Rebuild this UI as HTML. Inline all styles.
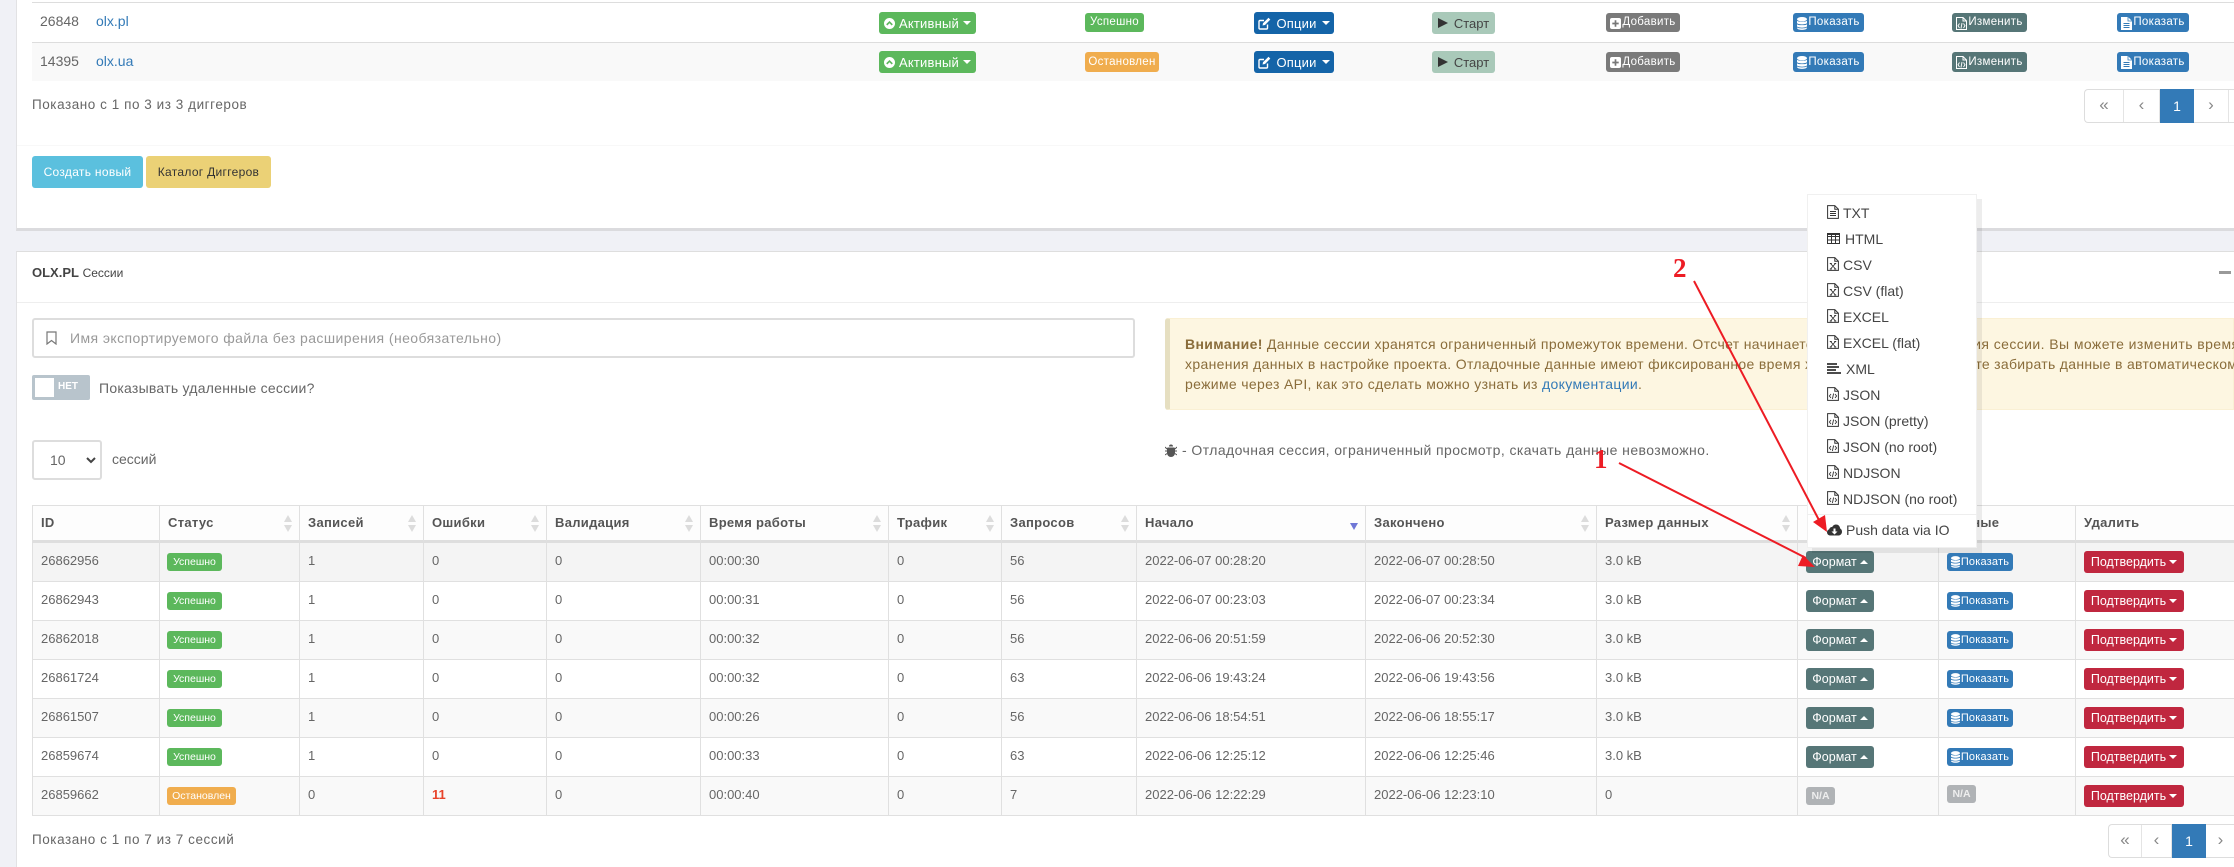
<!DOCTYPE html>
<html lang="ru"><head><meta charset="utf-8"><title>Сессии</title>
<style>
*{box-sizing:border-box}
html,body{margin:0;padding:0}
body{width:2234px;height:867px;overflow:hidden;background:#f0f1f6;font:13px "Liberation Sans","DejaVu Sans",sans-serif;color:#666;position:relative}
.abs,.t,.b,.l{position:absolute;white-space:nowrap}
.t{line-height:20px}
.w14{font-size:14px;letter-spacing:.42px}
.al{color:#8a6d3b;font-size:14px;letter-spacing:.34px}
a{color:#337ab7;text-decoration:none}
.b{display:flex;align-items:center;justify-content:center;border-radius:3px;color:#fff;line-height:1}
.b svg{flex:none}
.car{display:inline-block;width:0;height:0;border-left:4px solid transparent;border-right:4px solid transparent;border-top:4px solid #fff;margin-left:3px}
.up{border-top:0;border-bottom:4px solid #fff}
.act{width:97px;height:22px;background:#5cb85c;font-size:13px;letter-spacing:.2px;left:879px;gap:4px}
.opt{width:80px;height:22px;background:#1464a8;font-size:13px;letter-spacing:.2px;left:1254px;gap:5px}
.st{width:63px;height:22px;background:#a9c9b9;color:#444;font-size:13px;left:1432px;gap:6px}
.sm{font-size:11.5px;letter-spacing:.3px;gap:1px;padding-top:1px}
.add{left:1606px;width:74px;background:#7a7a7a}
.show{left:1793px;width:71px;background:#337ab7}
.chg{left:1952px;width:75px;background:#567677}
.sh2{left:2117px;width:72px;background:#337ab7}
.ok{background:#5cb85c}.warn{background:#f0ad4e}
#tb{position:absolute;left:32px;top:505px;border-collapse:separate;border-spacing:0;table-layout:fixed;width:2244px}
#tb th,#tb td{padding:0 8px;vertical-align:top;text-align:left;border-right:1px solid #e0e0e0}
#tb th{height:38px;background:#fdfdfd;border-top:1px solid #e0e0e0;border-bottom:3px solid #dedede;color:#555;font-weight:bold;font-size:13px;letter-spacing:.3px;line-height:34px;position:relative}
#tb td{height:39px;border-bottom:1px solid #e0e0e0;padding-top:8px;line-height:20px;color:#666}
#tb tr>*:first-child{border-left:1px solid #e0e0e0}
#tb tr.h td{background:#f4f4f4}
#tb tr.o td{background:#f9f9f9}
.lab{display:block;margin-top:2px;margin-left:-1px;height:18px;border-radius:3px;color:#fff;font-size:10.5px;line-height:18px;text-align:center;width:55px}
.sort:before,.sort:after{content:"";position:absolute;right:7px;width:0;height:0;border-left:4px solid transparent;border-right:4px solid transparent}
.sort:before{top:9px;border-bottom:7px solid #dcdcdc}
.sort:after{top:19px;border-top:7px solid #dcdcdc}
.sorted:before{display:none}
.sorted:after{top:17px;border-top:7px solid #6f77d6}
.fm{display:flex;align-items:center;justify-content:center;width:68px;height:22px;background:#567677;border-radius:3px;color:#fff;font-size:12.5px;line-height:1}
.sh{display:flex;align-items:center;justify-content:center;gap:1px;width:66px;height:18px;margin-top:2px;background:#337ab7;border-radius:3px;color:#fff;font-size:11px;letter-spacing:.2px;line-height:1}
.cf{display:flex;align-items:center;justify-content:center;width:100px;height:22px;background:#c0273f;border-radius:3px;color:#fff;font-size:12.5px;line-height:1}
.na{display:block;background:#b0b3b6;color:#eee;font-size:10.5px;font-weight:bold;border-radius:3px;text-align:center;height:18px;line-height:18px;width:29px}
.pg{position:absolute;height:34px;background:#fff;border:1px solid #ddd;border-right:0;border-radius:4px 0 0 4px;display:flex;color:#888;font-size:17px;line-height:30px;text-align:center}
.pg span{display:block;flex:none;border-right:1px solid #e4e4e4;height:32px}
.pg .cur{background:#337ab7;color:#fff;height:34px;margin:-1px 0;line-height:34px;border:0;font-size:14px}
#dd{position:absolute;left:1807px;top:194px;width:170px;height:354px;background:#fff;border:1px solid #f0f0f0;box-shadow:5px 5px 0 rgba(0,0,0,.07)}
#dd div{position:absolute;left:0;height:20px;white-space:nowrap;color:#444;font-size:14px;line-height:20px;padding-left:35px}
#dd svg{position:absolute;left:19px;top:2px;color:#333}
.hidden{position:absolute;width:0;height:0}
</style></head><body>
<svg class="hidden"><defs>
<symbol id="fdoc" viewBox="0 0 12 14"><path d="M.6.6h7.2l3.600 3.600v9.200H.6z M7.800.6v3.600h3.600" fill="none" stroke="currentColor"/><path d="M3 6.500h6M3 8.500h6M3 10.500h6" stroke="currentColor"/></symbol>
<symbol id="fx" viewBox="0 0 12 14"><path d="M.6.6h7.200l3.600 3.600v9.200H.6z M7.800.6v3.600h3.600" fill="none" stroke="currentColor"/><path d="M3.500 6.500l5 5.500M8.500 6.500l-5 5.500M2.800 6.500h2M7.200 6.500h2M2.800 12h2M7.200 12h2" stroke="currentColor" stroke-width=".9" fill="none"/></symbol>
<symbol id="fc" viewBox="0 0 12 14"><path d="M.6.6h7.200l3.600 3.600v9.200H.6z M7.800.6v3.600h3.600" fill="none" stroke="currentColor"/><path d="M4 7L2.400 9 4 11M8 7l1.600 2L8 11M6.600 6.500l-1.200 5.500" stroke="currentColor" stroke-width=".9" fill="none"/></symbol>
<symbol id="tbl" viewBox="0 0 13 11"><path d="M.5.5h12v10H.5z M.5 3.500h12M.5 7h12M4.500.5v10M8.500.5v10" fill="none" stroke="currentColor"/><path d="M.5.500h12v1.500H.5z" fill="currentColor"/></symbol>
<symbol id="ln" viewBox="0 0 14 11"><path d="M0 1h10M0 4h12M0 7h9M0 10h14" stroke="currentColor" stroke-width="1.800"/></symbol>
<symbol id="cld" viewBox="0 0 15 12"><path d="M3.500 11.500C1.500 11.500 0 10 0 8.200c0-1.400.9-2.600 2.200-3C2.600 3.600 4 2.800 5.200 3 6 1.400 7.500.5 9 .5c2.300 0 4 1.700 4.100 3.900C14.300 5 15 6.300 15 7.700c0 2.100-1.700 3.800-3.800 3.800z" fill="currentColor"/><path d="M6.500 4.500h2v3h2L7.500 10.500 4.500 7.500h2z" fill="#fff"/></symbol>
<symbol id="db" viewBox="0 0 10 13"><ellipse cx="5" cy="2.200" rx="5" ry="2.200" fill="currentColor"/><path d="M0 3.800c1 1.300 9 1.300 10 0V6c-1 1.800-9 1.800-10 0zM0 7.200c1 1.300 9 1.300 10 0v2.100c-1 1.800-9 1.800-10 0zM0 10.400c1 1.300 9 1.300 10 0v.7c-1 2.400-9 2.400-10 0z" fill="currentColor"/></symbol>
<symbol id="plus" viewBox="0 0 11 11"><rect width="11" height="11" rx="2" fill="currentColor"/><path d="M5.500 2.300v6.400M2.300 5.500h6.400" stroke="#777" stroke-width="1.700"/></symbol>
<symbol id="fw" viewBox="0 0 11 13"><path d="M0 0h7l4 4v9H0z" fill="currentColor"/><path d="M7 0v4h4" fill="none" stroke="#337ab7" stroke-width=".8"/><path d="M2.500 6.500h6M2.500 8.500h6M2.500 10.500h6" stroke="#337ab7"/></symbol>
<symbol id="fe" viewBox="0 0 11 13"><path d="M.5.500h6.500l3.500 3.500v8.500H.5z M7 .5v3.500h3.500" fill="none" stroke="currentColor"/><path d="M3.500 6.500L2 8.700 3.500 11M7.500 6.500L9 8.700 7.500 11M6 6l-1 5.500" stroke="currentColor" stroke-width=".9" fill="none"/></symbol>
<symbol id="cup" viewBox="0 0 12 12"><circle cx="6" cy="6" r="6" fill="#fff"/><path d="M3 7.500L6 4.500l3 3" stroke="#5cb85c" stroke-width="1.800" fill="none"/></symbol>
<symbol id="ed" viewBox="0 0 13 13"><path d="M9.500 7.500V11a1 1 0 0 1-1 1H2a1 1 0 0 1-1-1V4.500a1 1 0 0 1 1-1h4" fill="none" stroke="#fff" stroke-width="1.400"/><path d="M4.500 8.500l.6-2.400L10.500.8l1.800 1.800L7 8z" fill="#fff"/></symbol>
</defs></svg>

<!-- top panel -->
<div class="abs" style="left:16px;top:0;width:2218px;height:231px;background:#fff;border-left:1px solid #e2e2e4;border-bottom:3px solid #dbdbde"></div>
<div class="abs" style="left:32px;top:2px;width:2202px;height:1px;background:#ddd"></div>
<div class="abs" style="left:32px;top:42px;width:2202px;height:1px;background:#ddd"></div>
<div class="abs" style="left:32px;top:43px;width:2202px;height:38px;background:#f9f9f9"></div>
<div class="t" style="left:40px;top:11px;font-size:14px">26848</div><a class="t" style="left:96px;top:11px;font-size:14px">olx.pl</a>
<div class="t" style="left:40px;top:51px;font-size:14px">14395</div><a class="t" style="left:96px;top:51px;font-size:14px">olx.ua</a>

<div class="b act" style="top:12px"><svg width="11" height="11"><use href="#cup"/></svg>Активный<i class="car" style="margin-left:0"></i></div>
<div class="b act" style="top:51px"><svg width="11" height="11"><use href="#cup"/></svg>Активный<i class="car" style="margin-left:0"></i></div>
<div class="b sm ok" style="left:1085px;top:13px;width:59px;height:19px">Успешно</div>
<div class="b sm warn" style="left:1085px;top:52px;width:74px;height:20px">Остановлен</div>
<div class="b opt" style="top:12px"><svg width="13" height="13"><use href="#ed"/></svg>Опции<i class="car" style="margin-left:0"></i></div>
<div class="b opt" style="top:51px"><svg width="13" height="13"><use href="#ed"/></svg>Опции<i class="car" style="margin-left:0"></i></div>
<div class="b st" style="top:12px"><i style="display:block;border-left:10px solid #333;border-top:5px solid transparent;border-bottom:5px solid transparent"></i>Старт</div>
<div class="b st" style="top:51px"><i style="display:block;border-left:10px solid #333;border-top:5px solid transparent;border-bottom:5px solid transparent"></i>Старт</div>
<div class="b sm add" style="top:13px;height:19px"><svg width="11" height="11"><use href="#plus"/></svg>Добавить</div>
<div class="b sm add" style="top:52px;height:20px"><svg width="11" height="11"><use href="#plus"/></svg>Добавить</div>
<div class="b sm show" style="top:13px;height:19px"><svg width="10" height="13"><use href="#db"/></svg>Показать</div>
<div class="b sm show" style="top:52px;height:20px"><svg width="10" height="13"><use href="#db"/></svg>Показать</div>
<div class="b sm chg" style="top:13px;height:19px"><svg width="11" height="13"><use href="#fe"/></svg>Изменить</div>
<div class="b sm chg" style="top:52px;height:20px"><svg width="11" height="13"><use href="#fe"/></svg>Изменить</div>
<div class="b sm sh2" style="top:13px;height:19px"><svg width="11" height="13"><use href="#fw"/></svg>Показать</div>
<div class="b sm sh2" style="top:52px;height:20px"><svg width="11" height="13"><use href="#fw"/></svg>Показать</div>

<div class="t" style="left:32px;top:95px;font-size:13.5px;letter-spacing:.55px">Показано с 1 по 3 из 3 диггеров</div>
<div class="pg" style="left:2084px;top:89px;width:150px"><span style="width:39px">«</span><span style="width:36px">‹</span><span class="cur" style="width:34px">1</span><span style="width:35px">›</span></div>
<div class="abs" style="left:17px;top:145px;width:2217px;height:1px;background:#f8f8f8"></div>
<div class="b" style="left:32px;top:156px;width:111px;height:32px;background:#5bc0de;font-size:12px;letter-spacing:.3px">Создать новый</div>
<div class="b" style="left:146px;top:156px;width:125px;height:32px;background:#ebd176;color:#333;font-size:12px;letter-spacing:.3px">Каталог Диггеров</div>

<!-- sessions panel -->
<div class="abs" style="left:16px;top:251px;width:2218px;height:616px;background:#fff;border-left:1px solid #e2e2e4;border-top:1px solid #dedede"></div>
<div class="t" style="left:32px;top:263px;font-size:13px;color:#444"><b>OLX.PL</b> <span style="font-size:12px">Сессии</span></div>
<div class="abs" style="left:2219px;top:271px;width:12px;height:3px;background:#999"></div>
<div class="abs" style="left:17px;top:302px;width:2217px;height:1px;background:#eee"></div>

<div class="abs" style="left:32px;top:318px;width:1103px;height:40px;border:2px solid #ddd;border-radius:3px;background:#fff"></div>
<svg class="abs" style="left:46px;top:331px" width="11" height="14" viewBox="0 0 11 14"><path d="M1 1h9v12L5.500 9.500 1 13z" fill="none" stroke="#777" stroke-width="1.200"/></svg>
<div class="t w14" style="left:70px;top:328px;color:#999">Имя экспортируемого файла без расширения (необязательно)</div>

<div class="abs" style="left:32px;top:375px;width:58px;height:25px;background:#b8c4cc;border-radius:2px"></div>
<div class="abs" style="left:35px;top:378px;width:19px;height:19px;background:#fff"></div>
<div class="t" style="left:58px;top:377px;color:#fff;font-weight:bold;font-size:10px">НЕТ</div>
<div class="t" style="left:99px;top:378px;font-size:14px;letter-spacing:.25px">Показывать удаленные сессии?</div>

<div class="abs" style="left:32px;top:440px;width:70px;height:40px;border:2px solid #ddd;border-radius:3px;background:#fff"></div>
<div class="t" style="left:50px;top:450px;font-size:14px">10</div>
<svg class="abs" style="left:86px;top:457px" width="10" height="7" viewBox="0 0 10 7"><path d="M1 1l4 4 4-4" fill="none" stroke="#444" stroke-width="2"/></svg>
<div class="t" style="left:112px;top:449px;font-size:14px">сессий</div>

<div class="abs" style="left:1165px;top:318px;width:1069px;height:92px;background:#fdf6e1;border:1px solid #faf0d4;border-left:5px solid #e6dfc1;border-radius:3px 0 0 3px"></div>
<div class="t al" style="left:1185px;top:334px"><b>Внимание!</b> Данные сессии хранятся ограниченный промежуток времени. Отсчет начинается с момента</div>
<div class="t al" style="left:1906px;top:334px;letter-spacing:.42px">завершения сессии. Вы можете изменить время</div>
<div class="t al" style="left:1185px;top:354px">хранения данных в настройке проекта. Отладочные данные имеют фиксированное время хранения.</div>
<div class="t al" style="left:1916px;top:354px;letter-spacing:.3px">Вы можете забирать данные в автоматическом</div>
<div class="t al" style="left:1185px;top:374px">режиме через API, как это сделать можно узнать из <a>документации</a>.</div>

<svg class="abs" style="left:1165px;top:444px" width="12" height="13" viewBox="0 0 12 13"><path d="M4 2.500a2 2 0 0 1 4 0zM3 3.500h6c.6 0 1 .4 1 1V9a4 4 0 0 1-8 0V4.500c0-.6.4-1 1-1z" fill="#555"/><path d="M0 3l2 2M12 3l-2 2M0 7h2M10 7h2M0 11l2-1.500M12 11l-2-1.500" stroke="#555"/></svg>
<div class="t w14" style="left:1182px;top:440px">- Отладочная сессия, ограниченный просмотр, скачать данные невозможно.</div>

<table id="tb">
<colgroup><col style="width:128px"><col style="width:140px"><col style="width:124px"><col style="width:123px"><col style="width:154px"><col style="width:188px"><col style="width:113px"><col style="width:135px"><col style="width:229px"><col style="width:231px"><col style="width:201px"><col style="width:141px"><col style="width:137px"><col style="width:200px"></colgroup>
<thead><tr><th>ID</th><th class="sort">Статус</th><th class="sort">Записей</th><th class="sort">Ошибки</th><th class="sort">Валидация</th><th class="sort">Время работы</th><th class="sort">Трафик</th><th class="sort">Запросов</th><th class="sort sorted">Начало</th><th class="sort">Закончено</th><th class="sort">Размер данных</th><th></th><th>Данные</th><th>Удалить</th></tr></thead>
<tbody>
<tr class="h"><td>26862956</td><td><span class="lab ok">Успешно</span></td><td>1</td><td>0</td><td>0</td><td>00:00:30</td><td>0</td><td>56</td><td>2022-06-07 00:28:20</td><td>2022-06-07 00:28:50</td><td>3.0 kB</td><td><div class="fm">Формат<i class="car up"></i></div></td><td><div class="sh"><svg width="9" height="12"><use href="#db"/></svg>Показать</div></td><td><div class="cf">Подтвердить<i class="car"></i></div></td></tr>
<tr><td>26862943</td><td><span class="lab ok">Успешно</span></td><td>1</td><td>0</td><td>0</td><td>00:00:31</td><td>0</td><td>56</td><td>2022-06-07 00:23:03</td><td>2022-06-07 00:23:34</td><td>3.0 kB</td><td><div class="fm">Формат<i class="car up"></i></div></td><td><div class="sh"><svg width="9" height="12"><use href="#db"/></svg>Показать</div></td><td><div class="cf">Подтвердить<i class="car"></i></div></td></tr>
<tr class="o"><td>26862018</td><td><span class="lab ok">Успешно</span></td><td>1</td><td>0</td><td>0</td><td>00:00:32</td><td>0</td><td>56</td><td>2022-06-06 20:51:59</td><td>2022-06-06 20:52:30</td><td>3.0 kB</td><td><div class="fm">Формат<i class="car up"></i></div></td><td><div class="sh"><svg width="9" height="12"><use href="#db"/></svg>Показать</div></td><td><div class="cf">Подтвердить<i class="car"></i></div></td></tr>
<tr><td>26861724</td><td><span class="lab ok">Успешно</span></td><td>1</td><td>0</td><td>0</td><td>00:00:32</td><td>0</td><td>63</td><td>2022-06-06 19:43:24</td><td>2022-06-06 19:43:56</td><td>3.0 kB</td><td><div class="fm">Формат<i class="car up"></i></div></td><td><div class="sh"><svg width="9" height="12"><use href="#db"/></svg>Показать</div></td><td><div class="cf">Подтвердить<i class="car"></i></div></td></tr>
<tr class="o"><td>26861507</td><td><span class="lab ok">Успешно</span></td><td>1</td><td>0</td><td>0</td><td>00:00:26</td><td>0</td><td>56</td><td>2022-06-06 18:54:51</td><td>2022-06-06 18:55:17</td><td>3.0 kB</td><td><div class="fm">Формат<i class="car up"></i></div></td><td><div class="sh"><svg width="9" height="12"><use href="#db"/></svg>Показать</div></td><td><div class="cf">Подтвердить<i class="car"></i></div></td></tr>
<tr><td>26859674</td><td><span class="lab ok">Успешно</span></td><td>1</td><td>0</td><td>0</td><td>00:00:33</td><td>0</td><td>63</td><td>2022-06-06 12:25:12</td><td>2022-06-06 12:25:46</td><td>3.0 kB</td><td><div class="fm">Формат<i class="car up"></i></div></td><td><div class="sh"><svg width="9" height="12"><use href="#db"/></svg>Показать</div></td><td><div class="cf">Подтвердить<i class="car"></i></div></td></tr>
<tr class="o"><td>26859662</td><td><span class="lab warn" style="width:69px">Остановлен</span></td><td>0</td><td><b style="color:#e8432a">11</b></td><td>0</td><td>00:00:40</td><td>0</td><td>7</td><td>2022-06-06 12:22:29</td><td>2022-06-06 12:23:10</td><td>0</td><td><span class="na" style="margin-top:2px">N/A</span></td><td><span class="na" style="margin-top:0">N/A</span></td><td><div class="cf">Подтвердить<i class="car"></i></div></td></tr>
</tbody></table>

<div class="t" style="left:32px;top:830px;font-size:13.5px;letter-spacing:.55px">Показано с 1 по 7 из 7 сессий</div>
<div class="pg" style="left:2108px;top:824px;width:126px"><span style="width:33px">«</span><span style="width:30px">‹</span><span class="cur" style="width:34px">1</span><span style="width:29px;border:0">›</span></div>

<!-- dropdown -->
<div id="dd">
<div style="top:8px"><svg width="12" height="14"><use href="#fdoc"/></svg>TXT</div>
<div style="top:34px;padding-left:37px"><svg width="13" height="11" style="top:4px"><use href="#tbl"/></svg>HTML</div>
<div style="top:60px"><svg width="12" height="14"><use href="#fx"/></svg>CSV</div>
<div style="top:86px"><svg width="12" height="14"><use href="#fx"/></svg>CSV (flat)</div>
<div style="top:112px"><svg width="12" height="14"><use href="#fx"/></svg>EXCEL</div>
<div style="top:138px"><svg width="12" height="14"><use href="#fx"/></svg>EXCEL (flat)</div>
<div style="top:164px;padding-left:38px"><svg width="14" height="11" style="top:4px"><use href="#ln"/></svg>XML</div>
<div style="top:190px"><svg width="12" height="14"><use href="#fc"/></svg>JSON</div>
<div style="top:216px"><svg width="12" height="14"><use href="#fc"/></svg>JSON (pretty)</div>
<div style="top:242px"><svg width="12" height="14"><use href="#fc"/></svg>JSON (no root)</div>
<div style="top:268px"><svg width="12" height="14"><use href="#fc"/></svg>NDJSON</div>
<div style="top:294px"><svg width="12" height="14"><use href="#fc"/></svg>NDJSON (no root)</div>
<div style="top:319px;left:-1px;width:170px;height:1px;background:#eee;padding:0"></div>
<div style="top:325px;padding-left:38px"><svg width="15" height="12" style="top:4px"><use href="#cld"/></svg>Push data via IO</div>
</div>

<!-- annotations -->
<svg class="abs" style="left:0;top:0" width="2234" height="867">
<path d="M1619 463L1806 558" stroke="#ed1c24" stroke-width="2" fill="none"/>
<path d="M1803 555L1798 566L1815 567z" fill="#ed1c24"/>
<path d="M1694 281L1820 522" stroke="#ed1c24" stroke-width="2" fill="none"/>
<path d="M1813 522L1825 515L1827 532z" fill="#ed1c24"/>
<text x="1594" y="468" font-family="Liberation Serif" font-weight="bold" font-size="27" fill="#ed1c24">1</text>
<text x="1673" y="277" font-family="Liberation Serif" font-weight="bold" font-size="27" fill="#ed1c24">2</text>
</svg>
</body></html>
